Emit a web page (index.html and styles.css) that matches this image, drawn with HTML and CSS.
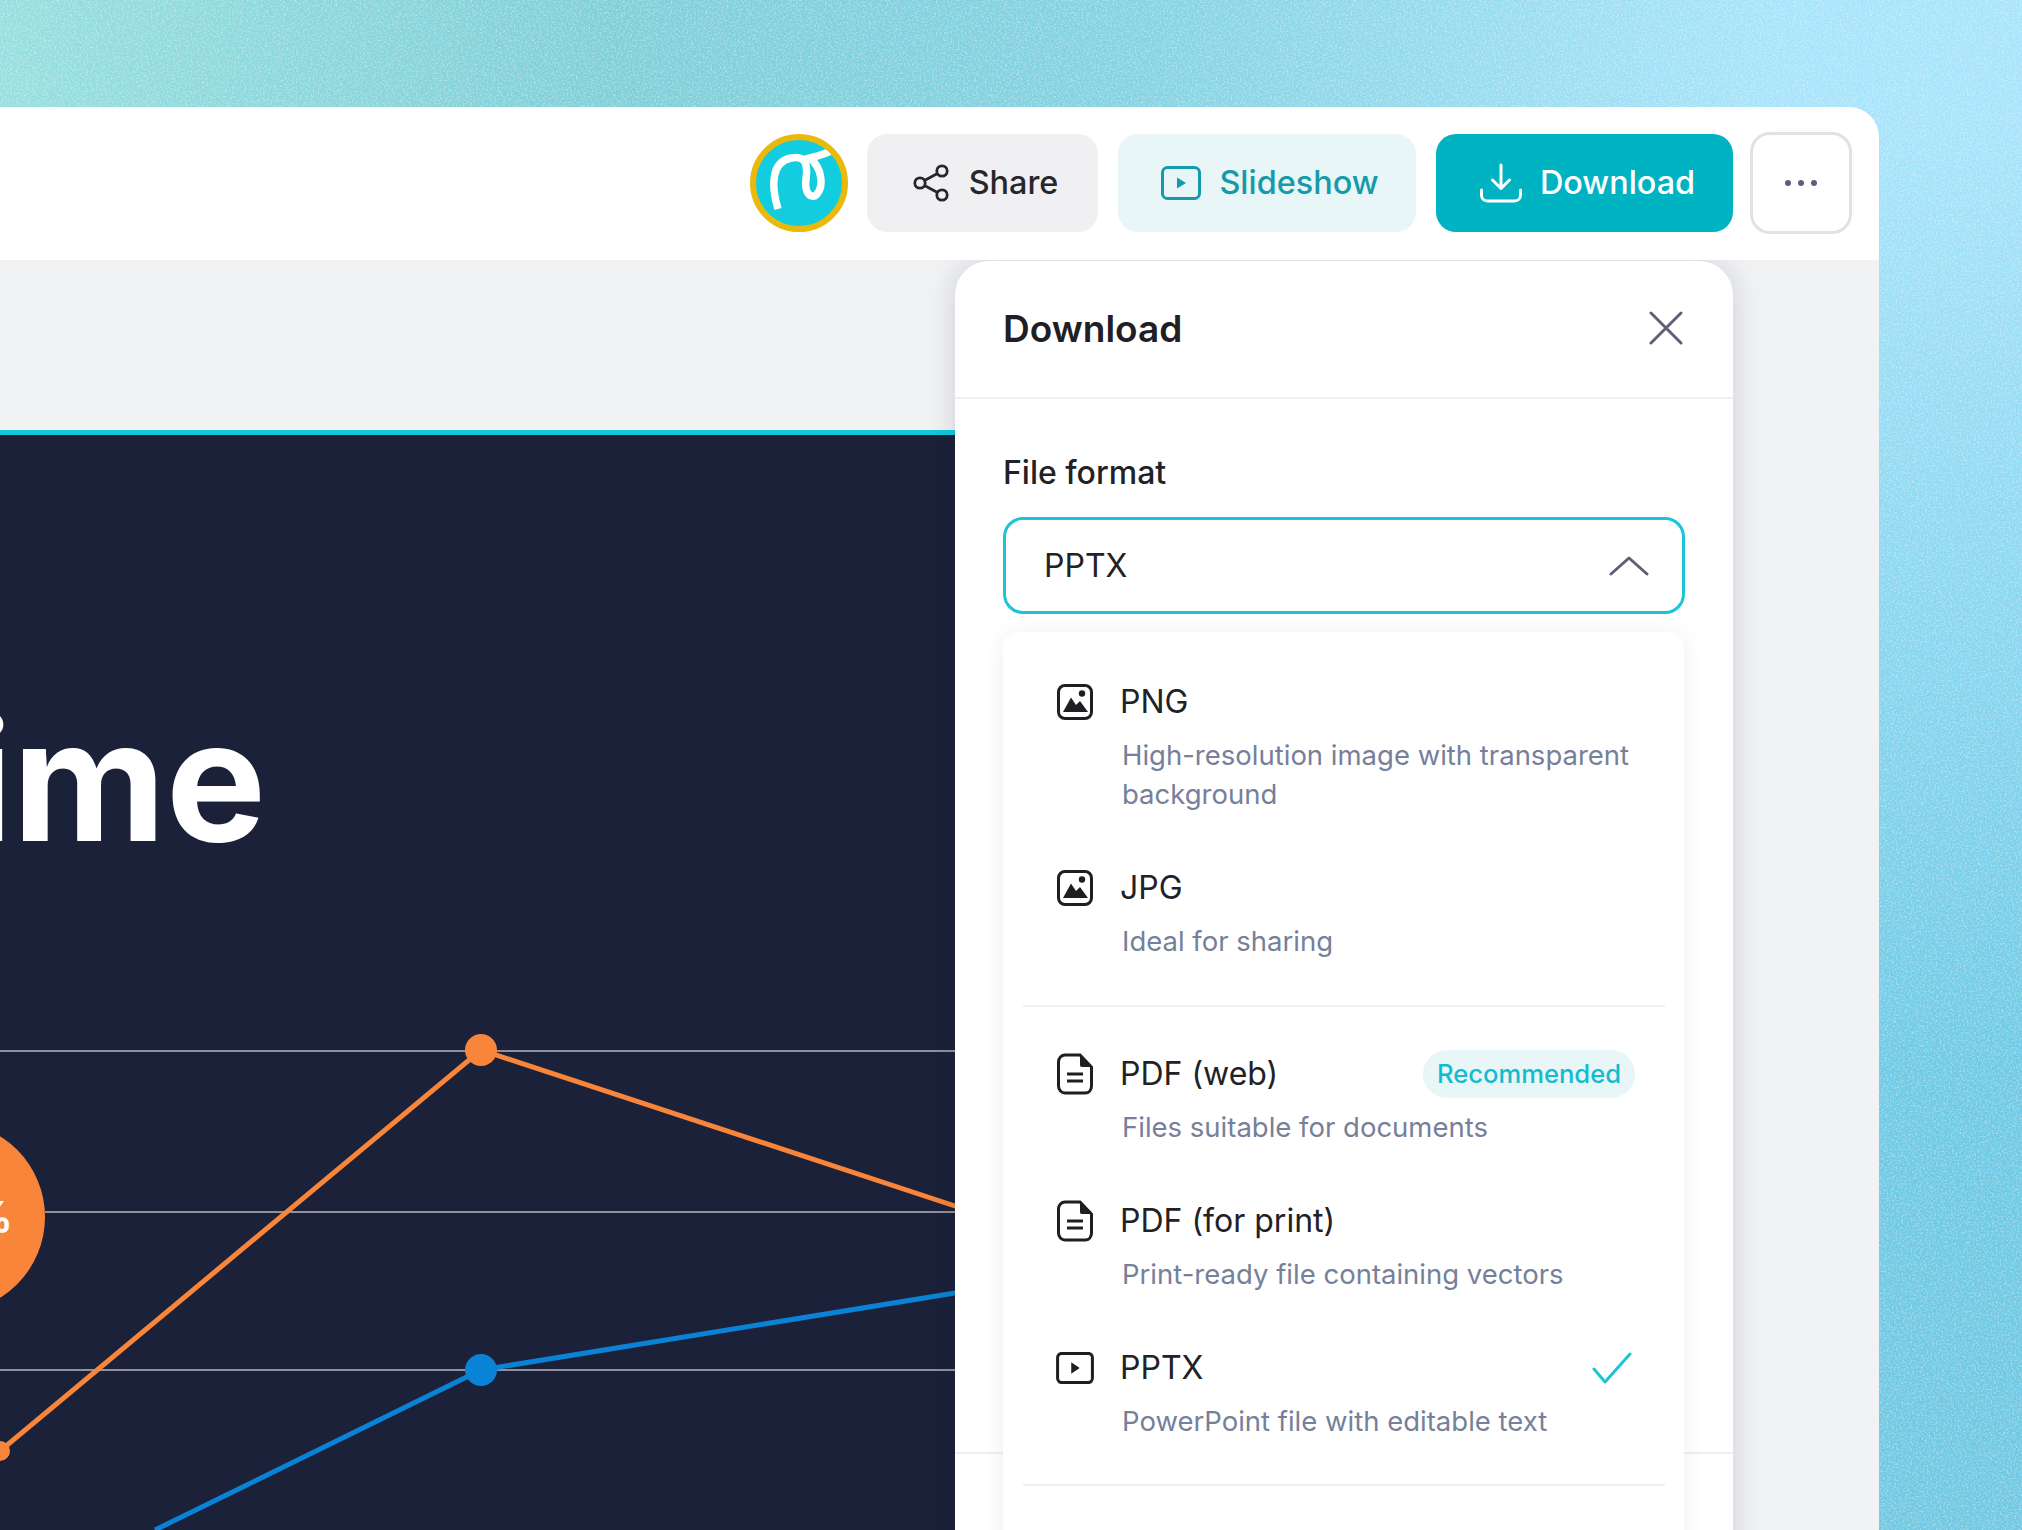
FILE: index.html
```html
<!DOCTYPE html>
<html lang="en">
<head>
<meta charset="utf-8">
<title>Download</title>
<link rel="stylesheet" href="styles.css">
</head>
<body>
<svg class="noise" width="2022" height="1530" aria-hidden="true"><filter id="grain" x="0" y="0" width="100%" height="100%"><feTurbulence type="fractalNoise" baseFrequency="0.55" numOctaves="3" seed="4"/><feColorMatrix type="matrix" values="0 0 0 0 1  0 0 0 0 1  0 0 0 0 1  3.5 0 0 0 -1.55"/></filter><rect width="2022" height="1530" filter="url(#grain)"/></svg>
<div class="window">
  <header class="topbar">
    <svg class="avatar" width="98" height="98" viewBox="0 0 98 98"><circle cx="49" cy="49" r="46" fill="#12cddf"/><path d="M28 75C21 52 21 28 41 24C56 21 58 31 56 45C54 60 62 66 67 60C74 52 72 34 60 24C68 22 76 20 85 15" fill="none" stroke="#fff" stroke-width="7.500"/><circle cx="49" cy="49" r="46" fill="none" stroke="#e9b90e" stroke-width="6"/></svg>
    <button class="btn btn-share"><svg width="38" height="38" viewBox="0 0 38 38" fill="none" stroke="#27272b" stroke-width="2.800"><circle cx="7" cy="19" r="5.200"/><circle cx="29" cy="7" r="5.200"/><circle cx="29" cy="31" r="5.200"/><path d="M11.500 16.400L24.500 9.600M11.500 21.600L24.500 28.400"/></svg>Share</button>
    <button class="btn btn-slide"><svg width="40" height="34" viewBox="0 0 40 34" fill="none"><rect x="1.500" y="1.500" width="37" height="31" rx="5" stroke="#159aa9" stroke-width="3"/><path d="M16 11.500L25 17L16 22.500Z" fill="#159aa9"/></svg>Slideshow</button>
    <button class="btn btn-download"><svg width="42" height="40" viewBox="0 0 42 40" fill="none" stroke="#fff" stroke-width="3" stroke-linecap="round" stroke-linejoin="round"><path d="M21 2V25M12.500 17L21 25.500L29.500 17"/><path d="M1.500 27V32C1.500 35.500 4 38 7.500 38H34.500C38 38 40.500 35.500 40.500 32V27"/></svg>Download</button>
    <button class="btn btn-more" aria-label="More"><i></i><i></i><i></i></button>
  </header>
  <main class="canvas">
    <section class="slide">
      <div class="headline">Time</div>
      <svg class="chart" width="1200" height="600" viewBox="0 0 1200 600" fill="none">
        <path d="M0 102H1200M45 263H1200M0 421H1200" stroke="#8f929c" stroke-width="2"/>
        <path d="M0 502L481 101L955 257L1200 337" stroke="#f9853a" stroke-width="5"/>
        <path d="M155 581L481 421L955 344L1200 304" stroke="#0a83d6" stroke-width="5"/>
        <circle cx="0" cy="502" r="10" fill="#f9853a"/>
        <circle cx="481" cy="101" r="16" fill="#f9853a"/>
        <circle cx="481" cy="421" r="16" fill="#0a83d6"/>
        <circle cx="-50" cy="268" r="95" fill="#f9853a"/>
      </svg>
      <div class="pct">%</div>
    </section>
    <aside class="panel">
      <div class="panel-head">
        <h2>Download</h2>
        <svg width="34" height="34" viewBox="0 0 34 34" fill="none" stroke="#5f5f75" stroke-width="3" stroke-linecap="round"><path d="M2 2L32 32M32 2L2 32"/></svg>
      </div>
      <div class="panel-body">
        <label class="field-label">File format</label>
        <div class="select">
          <span>PPTX</span>
          <svg width="40" height="20" viewBox="0 0 40 20" fill="none" stroke="#5f5f75" stroke-width="3" stroke-linecap="round" stroke-linejoin="round"><path d="M2 18L20 2L38 18"/></svg>
        </div>
      </div>
      <div class="panel-foot"></div>
      <div class="menu">
        <div class="item">
          <div class="item-head"><svg class="ico" width="38" height="38" viewBox="0 0 38 38"><rect x="2.500" y="2.500" width="33" height="33" rx="6.500" fill="none" stroke="#1f1f23" stroke-width="3"/><path d="M7 29L15 14.500L20 22L24 18L32 29Z" fill="#1f1f23"/><circle cx="26" cy="10.500" r="3.200" fill="#1f1f23"/></svg><span class="label">PNG</span></div>
          <p class="desc">High-resolution image with transparent background</p>
        </div>
        <div class="item">
          <div class="item-head"><svg class="ico" width="38" height="38" viewBox="0 0 38 38"><rect x="2.500" y="2.500" width="33" height="33" rx="6.500" fill="none" stroke="#1f1f23" stroke-width="3"/><path d="M7 29L15 14.500L20 22L24 18L32 29Z" fill="#1f1f23"/><circle cx="26" cy="10.500" r="3.200" fill="#1f1f23"/></svg><span class="label">JPG</span></div>
          <p class="desc">Ideal for sharing</p>
        </div>
        <hr class="rule">
        <div class="item">
          <div class="item-head"><svg class="ico" width="38" height="42" viewBox="0 0 38 42"><path d="M9 2H24L35.500 14V33C35.500 37 33 40 29 40H9C5.500 40 2.500 37 2.500 33V9C2.500 5 5.500 2 9 2Z" fill="none" stroke="#1f1f23" stroke-width="3"/><path d="M24 2L35.500 14H26C24.500 14 24 13 24 12Z" fill="#1f1f23"/><path d="M11 21H27M11 28H27" stroke="#1f1f23" stroke-width="3"/></svg><span class="label">PDF (web)</span><span class="badge">Recommended</span></div>
          <p class="desc">Files suitable for documents</p>
        </div>
        <div class="item">
          <div class="item-head"><svg class="ico" width="38" height="42" viewBox="0 0 38 42"><path d="M9 2H24L35.500 14V33C35.500 37 33 40 29 40H9C5.500 40 2.500 37 2.500 33V9C2.500 5 5.500 2 9 2Z" fill="none" stroke="#1f1f23" stroke-width="3"/><path d="M24 2L35.500 14H26C24.500 14 24 13 24 12Z" fill="#1f1f23"/><path d="M11 21H27M11 28H27" stroke="#1f1f23" stroke-width="3"/></svg><span class="label">PDF (for print)</span></div>
          <p class="desc">Print-ready file containing vectors</p>
        </div>
        <div class="item">
          <div class="item-head"><svg class="ico" width="38" height="32" viewBox="0 0 40 34"><rect x="1.500" y="1.500" width="37" height="31" rx="4.500" fill="none" stroke="#1f1f23" stroke-width="3.200"/><path d="M16 11L25 17L16 23Z" fill="#1f1f23"/></svg><span class="label">PPTX</span><svg class="check" width="40" height="32" viewBox="0 0 40 32" fill="none" stroke="#1cc5d6" stroke-width="3" stroke-linecap="round" stroke-linejoin="round"><path d="M2 17L13 30L38 2"/></svg></div>
          <p class="desc">PowerPoint file with editable text</p>
        </div>
        <hr class="rule rule-last">
      </div>
    </aside>
  </main>
</div>
</body>
</html>
```

FILE: styles.css
```css
* { box-sizing: border-box; }
html, body { margin: 0; height: 1530px; overflow: hidden; }
body {
  width: 2022px;
  position: relative;
  font-family: Inter, "Liberation Sans", sans-serif;
  color: #222226;
  background:
    linear-gradient(180deg, rgba(112, 202, 229, 0) 8%, #70cae5 70%, #72c8e2 100%),
    linear-gradient(90deg, #97dfdf 0, #80cfd8 30%, #84d2e2 55%, #a8e4fb 88%, #a8e4fb 100%);
}
.noise { position: absolute; left: 0; top: 0; opacity: 0.3; }
.window {
  position: relative;
  width: 1879px;
  height: 1530px;
  padding-top: 107px;
  overflow: hidden;
  display: flex;
  flex-direction: column;
}
.topbar {
  height: 153px;
  flex: none;
  background: #fff;
  border-top-right-radius: 30px;
  display: flex;
  align-items: center;
  justify-content: flex-end;
  gap: 20px;
  padding: 0 27px 2px 0;
  position: relative;
  z-index: 2;
}
.avatar { flex: none; margin-right: -1px; }
.btn {
  height: 98px;
  border: 0;
  border-radius: 20px;
  font: 500 32.400px Inter, "Liberation Sans", sans-serif;
  display: flex;
  align-items: center;
  justify-content: center;
  gap: 18px;
  padding: 0 0 0 6px;
}
.btn-share { width: 231px; background: #f0f0f2; color: #27272b; }
.btn-slide { width: 298px; background: #e8f6f8; color: #159aa9; }
.btn-download { width: 297px; background: #00b3c3; color: #fff; }
.btn-more {
  width: 102px;
  height: 102px;
  margin-left: -3px;
  background: #fff;
  border: 3px solid #e2e2e5;
  gap: 7px;
  padding: 0;
}
.btn-more i { width: 6px; height: 6px; border-radius: 50%; background: #5f5f75; }
.canvas {
  flex: 1;
  position: relative;
  background: #f1f2f4;
}
.slide {
  position: absolute;
  left: 0;
  top: 170px;
  width: 1200px;
  height: 1100px;
  background: #1a2139;
  border-top: 5px solid #12c9dc;
  overflow: hidden;
}
.headline {
  position: absolute;
  right: 934px;
  top: 245px;
  font: 700 168px/200px Inter, "Liberation Sans", sans-serif;
  color: #fff;
}
.chart { position: absolute; left: 0; top: 514px; overflow: visible; }
.pct {
  position: absolute;
  left: -30px;
  top: 759px;
  font: 700 42px/46px Inter, "Liberation Sans", sans-serif;
  color: #fff;
}
.panel {
  position: absolute;
  left: 955px;
  top: 1px;
  width: 778px;
  height: 1400px;
  background: #fff;
  border-radius: 34px 34px 0 0;
  box-shadow: 0 0 30px rgba(20, 20, 40, 0.15);
}
.panel-head {
  height: 138px;
  border-bottom: 2px solid #eeeff1;
  padding: 0 50px 2px 48px;
  display: flex;
  align-items: center;
  justify-content: space-between;
}
.panel-head h2 { margin: 0; font-size: 37px; font-weight: 600; color: #202024; }
.panel-body { padding: 52px 48px 0; }
.field-label { display: block; font-size: 32px; font-weight: 500; line-height: 44px; }
.select {
  margin-top: 22px;
  height: 97px;
  border: 3px solid #1cc5d6;
  border-radius: 20px;
  display: flex;
  align-items: center;
  justify-content: space-between;
  padding: 0 33px 0 38px;
  font-size: 32px;
}
.panel-foot {
  position: absolute;
  left: 0;
  right: 0;
  top: 1191px;
  border-top: 2px solid #eeeff1;
}
.menu {
  position: absolute;
  left: 48px;
  top: 371px;
  width: 681px;
  height: 1100px;
  background: #fff;
  border-radius: 16px;
  padding: 48px 49px 0 53px;
  box-shadow: 0 2px 22px rgba(30, 30, 50, 0.07);
}
.item + .item { margin-top: 52px; }
.item-head { display: flex; align-items: center; height: 44px; }
.ico { flex: none; margin-right: 26px; }
.label { font-size: 32px; line-height: 44px; color: #222226; }
.desc {
  margin: 12px 0 0 66px;
  width: 520px;
  font-size: 27.500px;
  line-height: 39px;
  color: #76809a;
}
.badge {
  margin-left: auto;
  height: 48px;
  padding: 0 14px;
  border-radius: 24px;
  background: #e8f6f8;
  color: #12bccf;
  font-size: 25.600px;
  font-weight: 500;
  line-height: 48px;
}
.check { margin-left: auto; margin-right: 3px; }
.rule {
  border: 0;
  border-top: 2px solid #eeeff1;
  margin: 44px 19px 45px -33px;
  width: 642px;
}
.rule-last { margin-top: 43px; }
```
